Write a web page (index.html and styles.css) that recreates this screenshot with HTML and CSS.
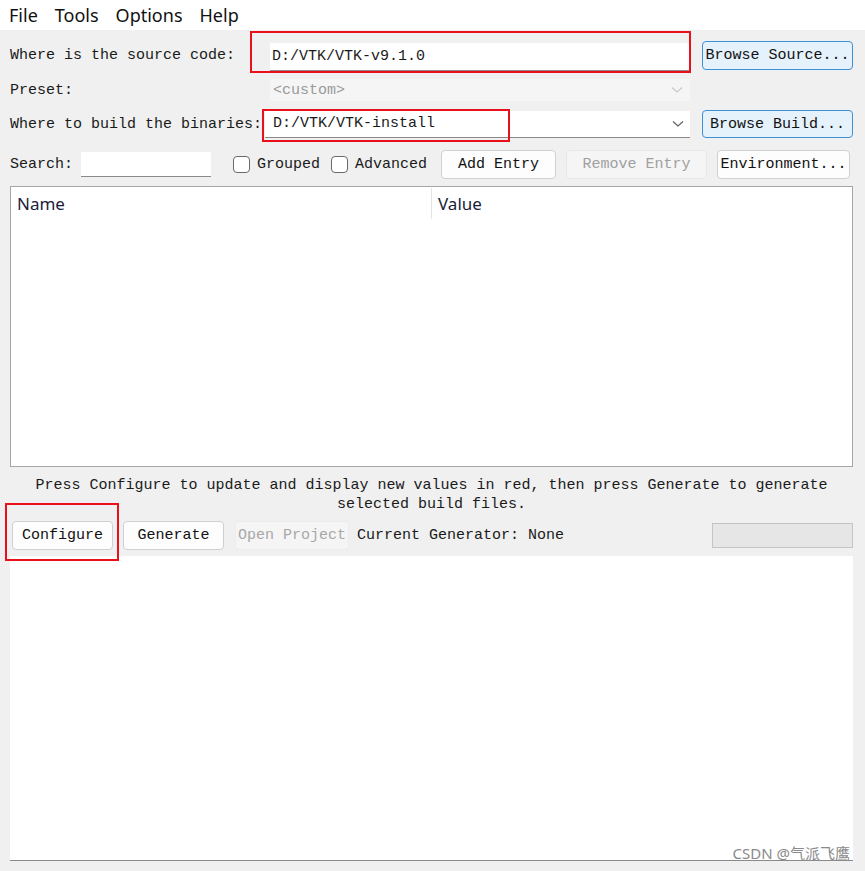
FILE: index.html
```html
<!DOCTYPE html>
<html lang="en">
<head>
    <meta charset="UTF-8">
    <meta name="viewport" content="width=device-width, initial-scale=1.0">
    <title>CMake</title>
    <link rel="stylesheet" href="styles.css">
</head>
<body>
    <div class="menubar">
        <span class="menu-item">File</span>
        <span class="menu-item">Tools</span>
        <span class="menu-item">Options</span>
        <span class="menu-item">Help</span>
    </div>

    <div class="main">
        <div class="row row-source">
            <label class="label label-source">Where is the source code:</label>
            <div class="field field-source">D:/VTK/VTK-v9.1.0</div>
            <button class="btn btn-focus">Browse Source...</button>
        </div>

        <div class="row row-preset">
            <label class="label label-source">Preset:</label>
            <div class="combo combo-disabled">
                <span>&lt;custom&gt;</span>
                <svg class="chevron" width="12" height="8" viewBox="0 0 12 8"><path d="M1 1.5 L6 6 L11 1.5" fill="none" stroke="#c8c8c8" stroke-width="1.2"/></svg>
            </div>
        </div>

        <div class="row row-build">
            <label class="label label-build">Where to build the binaries:</label>
            <div class="combo combo-build">
                <span>D:/VTK/VTK-install</span>
                <svg class="chevron" width="12" height="8" viewBox="0 0 12 8"><path d="M1 1.5 L6 6 L11 1.5" fill="none" stroke="#606060" stroke-width="1.2"/></svg>
            </div>
            <button class="btn btn-focus">Browse Build...</button>
        </div>

        <div class="row row-search">
            <label class="label">Search:</label>
            <div class="field field-search"></div>
            <span class="check"><span class="box"></span>Grouped</span>
            <span class="check"><span class="box"></span>Advanced</span>
            <button class="btn btn-add">Add Entry</button>
            <button class="btn btn-remove" disabled>Remove Entry</button>
            <button class="btn btn-env">Environment...</button>
        </div>

        <div class="table">
            <div class="table-head">
                <div class="col col-name">Name</div>
                <div class="col col-value">Value</div>
            </div>
        </div>

        <p class="hint">Press Configure to update and display new values in red, then press Generate to generate<br>selected build files.</p>

        <div class="row row-actions">
            <button class="btn btn-action">Configure</button>
            <button class="btn btn-action">Generate</button>
            <button class="btn btn-open" disabled>Open Project</button>
            <span class="generator">Current Generator: None</span>
            <div class="progress"></div>
        </div>

        <div class="output"></div>
    </div>

    <div class="mark mark-source"></div>
    <div class="mark mark-build"></div>
    <div class="mark mark-configure"></div>
    <div class="watermark">CSDN @气派飞鹰</div>
</body>
</html>
```

FILE: styles.css
```css
body {
    margin: 0;
    background-color: #f0f0f0;
    font-family: "Liberation Mono", "Courier New", Cousine, "Noto Sans CJK SC", monospace;
    font-size: 15px;
    color: #1a1a1a;
    width: 865px;
    height: 871px;
    overflow: hidden;
    position: relative;
}

.menubar {
    height: 30px;
    background: #fff;
    display: flex;
    align-items: center;
    padding-left: 9px;
    gap: 17px;
    font-family: "Noto Sans", "Noto Sans CJK SC", sans-serif;
    font-size: 18px;
    color: #111;
}

.main {
    padding: 0 12px 0 10px;
}

.row {
    display: flex;
    align-items: center;
}

.label {
    white-space: nowrap;
}

.label-source {
    width: 260px;
    flex: none;
}

.label-build {
    width: 255px;
    flex: none;
}

.field {
    background: #fff;
    border-bottom: 1px solid #8a8a8a;
    box-sizing: border-box;
}

.row-source {
    margin-top: 10px;
    height: 31px;
}

.field-source {
    width: 420px;
    height: 28px;
    margin-top: 2px;
    padding: 5px 0 0 2px;
}

.btn {
    font-family: inherit;
    font-size: 15px;
    color: #111;
    background: #fdfdfd;
    border: 1px solid #d0d0d0;
    border-radius: 4px;
    height: 29px;
    padding: 0;
    white-space: nowrap;
}

.btn-focus {
    background: #e5f1fb;
    border: 1px solid #3d8fd6;
    width: 151px;
    margin-left: 12px;
}

.row-preset {
    margin-top: 8px;
    height: 22px;
}

.combo {
    display: flex;
    align-items: center;
    justify-content: space-between;
    box-sizing: border-box;
}

.combo-disabled {
    width: 420px;
    height: 22px;
    background: #f5f5f5;
    color: #9a9a9a;
    padding: 0 7px 0 3px;
}

.row-build {
    margin-top: 8px;
    height: 30px;
}

.combo-build {
    width: 425px;
    height: 27px;
    background: #fff;
    border-bottom: 1px solid #8a8a8a;
    padding: 0 6px 0 8px;
}

.row-build .btn-focus {
    height: 28px;
}

.row-search {
    margin-top: 10px;
    height: 30px;
}

.field-search {
    width: 130px;
    height: 25px;
    margin-left: 8px;
}

.check {
    display: flex;
    align-items: center;
    margin-left: 22px;
}

.check + .check {
    margin-left: 11px;
}

.box {
    width: 15px;
    height: 15px;
    border: 1px solid #6a6a6a;
    border-radius: 4px;
    background: #fff;
    margin-right: 7px;
}

.btn-add {
    width: 115px;
    margin-left: 14px;
}

.btn-remove {
    width: 141px;
    margin-left: 10px;
    background: #f5f5f5;
    border-color: #e8e8e8;
    color: #a0a0a0;
}

.btn-env {
    width: 133px;
    margin-left: 10px;
}

.table {
    margin-top: 7px;
    height: 281px;
    background: #fff;
    border: 1px solid #a6a6a6;
    box-sizing: border-box;
}

.table-head {
    display: flex;
    height: 32px;
    padding-top: 1px;
    box-sizing: border-box;
    font-family: "Noto Sans", "Noto Sans CJK SC", sans-serif;
    font-size: 17px;
    color: #1c1c3a;
}

.col {
    display: flex;
    align-items: center;
    padding-left: 6px;
}

.col-name {
    width: 414px;
    border-right: 1px solid #e4e4e4;
}

.hint {
    margin: 9px 0 0 0;
    text-align: center;
    line-height: 19px;
}

.row-actions {
    margin-top: 6px;
    height: 30px;
}

.btn-action {
    width: 101px;
    margin-left: 2px;
}

.btn-action + .btn-action {
    margin-left: 10px;
}

.btn-open {
    width: 114px;
    margin-left: 11px;
    background: #f5f5f5;
    border-color: #ececec;
    color: #a8a8a8;
}

.generator {
    margin-left: 8px;
    flex: 1;
}

.progress {
    width: 141px;
    height: 25px;
    background: #e6e6e6;
    border: 1px solid #c4c4c4;
    box-sizing: border-box;
}

.output {
    margin-top: 6px;
    height: 304px;
    background: #fff;
    border-bottom: 1px solid #8a8a8a;
}

.mark {
    position: absolute;
    border: 2px solid #e8101a;
    box-sizing: border-box;
}

.mark-source {
    left: 250px;
    top: 31px;
    width: 441px;
    height: 42px;
}

.mark-build {
    left: 262px;
    top: 109px;
    width: 248px;
    height: 33px;
}

.mark-configure {
    left: 5px;
    top: 503px;
    width: 114px;
    height: 58px;
}

.watermark {
    position: absolute;
    right: 15px;
    bottom: 8px;
    font-family: "Noto Sans", "Noto Sans CJK SC", sans-serif;
    font-size: 15px;
    color: #8a8a8a;
}
```
